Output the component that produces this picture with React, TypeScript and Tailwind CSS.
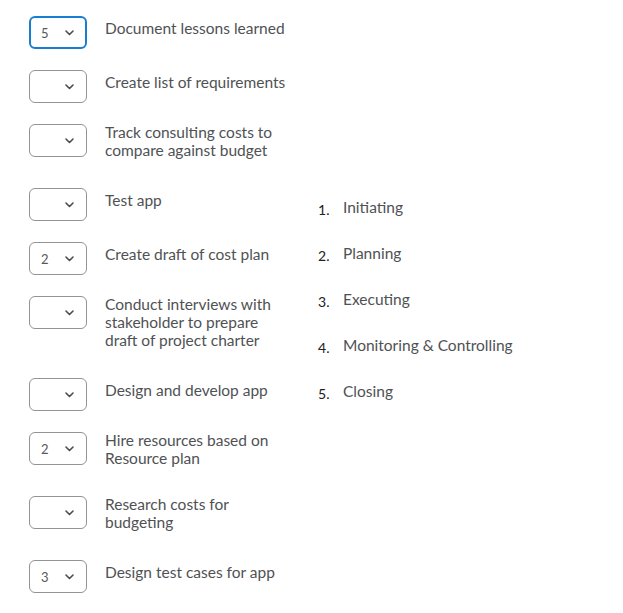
const rows: { value: string; text: string; focused?: boolean }[] = [
  { value: '5', text: 'Document lessons learned', focused: true },
  { value: '', text: 'Create list of requirements' },
  { value: '', text: 'Track consulting costs to compare against budget' },
  { value: '', text: 'Test app' },
  { value: '2', text: 'Create draft of cost plan' },
  { value: '', text: 'Conduct interviews with stakeholder to prepare draft of project charter' },
  { value: '', text: 'Design and develop app' },
  { value: '2', text: 'Hire resources based on Resource plan' },
  { value: '', text: 'Research costs for budgeting' },
  { value: '3', text: 'Design test cases for app' },
];

const phases = ['Initiating', 'Planning', 'Executing', 'Monitoring & Controlling', 'Closing'];

function Chevron() {
  return (
    <svg width="9" height="6" viewBox="0 0 9 6" fill="none" className="text-[#494c4e]">
      <path d="M1 1l3.5 3.5L8 1" stroke="currentColor" strokeWidth="1.6" strokeLinecap="round" strokeLinejoin="round" />
    </svg>
  );
}

function SelectBox({ value, focused }: { value: string; focused?: boolean }) {
  return (
    <div
      className={
        focused
          ? 'mt-[1px] flex h-[33px] w-[58px] shrink-0 items-center justify-between rounded-[6px] border-2 border-[#1a7ed0] pl-[10px] pr-[11px]'
          : 'mt-[1px] flex h-[33px] w-[58px] shrink-0 items-center justify-between rounded-[6px] border border-[#8f9498] pl-[11px] pr-[12px]'
      }
    >
      <span className="text-[13px] text-[#565a5c]">{value}</span>
      <Chevron />
    </div>
  );
}

export default function App() {
  return (
    <div
      className="min-h-screen bg-white text-[15.5px] leading-[18px] text-[#4f5254]"
      style={{ fontFamily: 'Lato, "Open Sans", sans-serif' }}
    >
      <div className="flex items-center pl-[29px] pt-[15px]">
        <div className="flex flex-col">
          {rows.map((r, i) => (
            <div key={i} className="flex items-start gap-[18px] pb-[20px]">
              <SelectBox value={r.value} focused={r.focused} />
              <div className="pb-[8px]">
                <div className="flex min-h-[26px] w-[184px] items-center">{r.text}</div>
              </div>
            </div>
          ))}
        </div>
        <ol className="ml-[29px] flex flex-col gap-[25px] pb-[27px]">
          {phases.map((p, i) => (
            <li key={p} className="flex items-start">
              <span className="w-[25px] pt-[3px] text-[14px] text-[#202122]">{i + 1}.</span>
              <span>{p}</span>
            </li>
          ))}
        </ol>
      </div>
    </div>
  );
}
